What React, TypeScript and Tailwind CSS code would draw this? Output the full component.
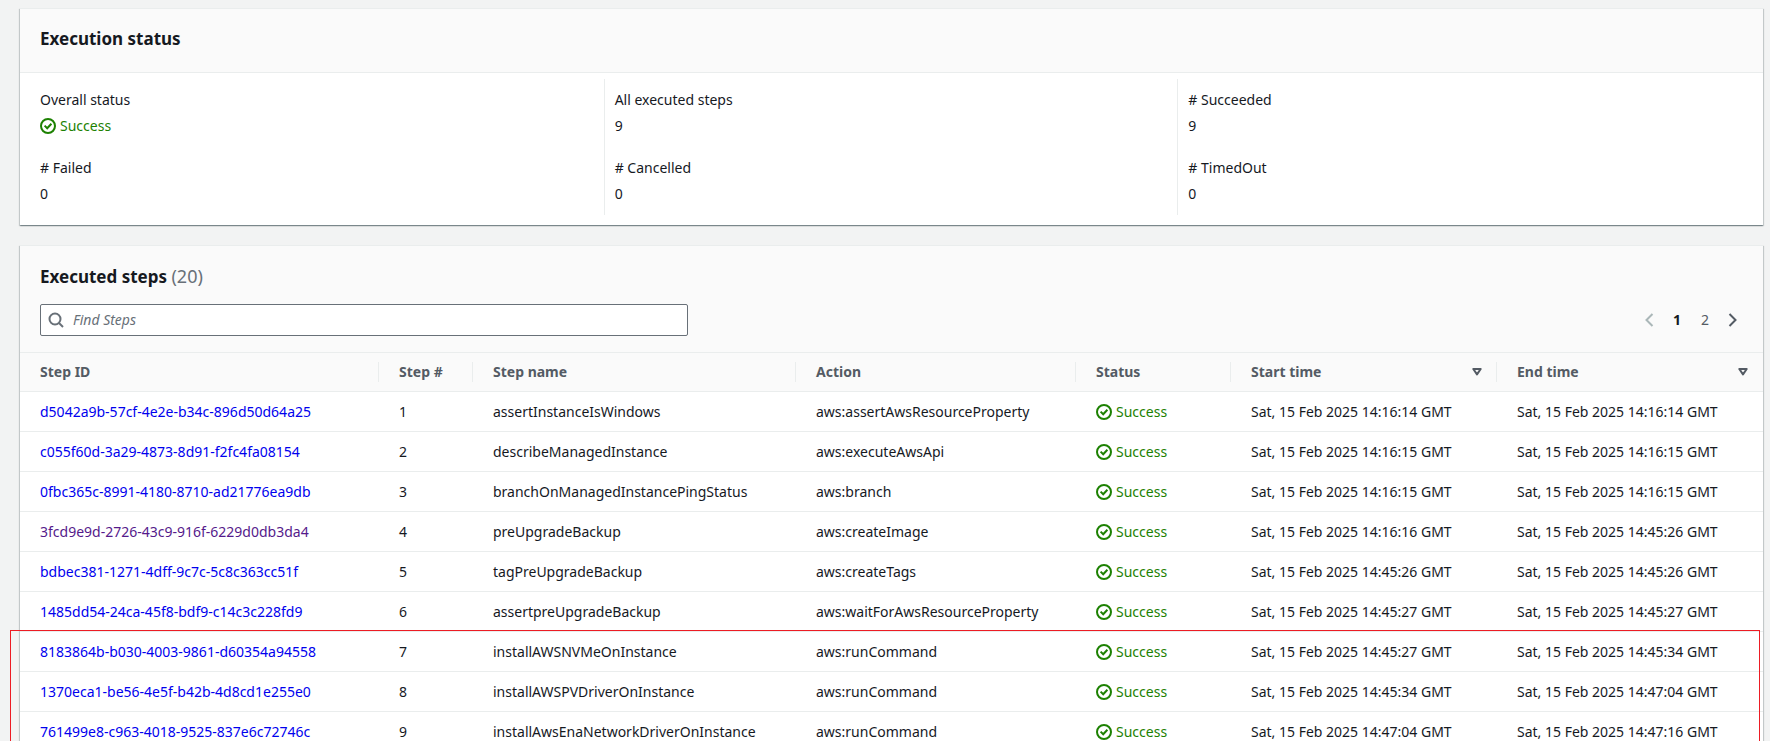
import { useState } from "react";

interface Step {
  id: string;
  name: string;
  action: string;
  start: string;
  end: string;
  visited?: boolean;
}

const steps: Step[] = [
  { id: "d5042a9b-57cf-4e2e-b34c-896d50d64a25", name: "assertInstanceIsWindows", action: "aws:assertAwsResourceProperty", start: "14:16:14", end: "14:16:14" },
  { id: "c055f60d-3a29-4873-8d91-f2fc4fa08154", name: "describeManagedInstance", action: "aws:executeAwsApi", start: "14:16:15", end: "14:16:15" },
  { id: "0fbc365c-8991-4180-8710-ad21776ea9db", name: "branchOnManagedInstancePingStatus", action: "aws:branch", start: "14:16:15", end: "14:16:15" },
  { id: "3fcd9e9d-2726-43c9-916f-6229d0db3da4", name: "preUpgradeBackup", action: "aws:createImage", start: "14:16:16", end: "14:45:26", visited: true },
  { id: "bdbec381-1271-4dff-9c7c-5c8c363cc51f", name: "tagPreUpgradeBackup", action: "aws:createTags", start: "14:45:26", end: "14:45:26" },
  { id: "1485dd54-24ca-45f8-bdf9-c14c3c228fd9", name: "assertpreUpgradeBackup", action: "aws:waitForAwsResourceProperty", start: "14:45:27", end: "14:45:27" },
  { id: "8183864b-b030-4003-9861-d60354a94558", name: "installAWSNVMeOnInstance", action: "aws:runCommand", start: "14:45:27", end: "14:45:34" },
  { id: "1370eca1-be56-4e5f-b42b-4d8cd1e255e0", name: "installAWSPVDriverOnInstance", action: "aws:runCommand", start: "14:45:34", end: "14:47:04" },
  { id: "761499e8-c963-4018-9525-837e6c72746c", name: "installAwsEnaNetworkDriverOnInstance", action: "aws:runCommand", start: "14:47:04", end: "14:47:16" },
];

const columns = [
  { label: "Step ID", width: "w-[359px]" },
  { label: "Step #", width: "w-[94px]" },
  { label: "Step name", width: "w-[323px]" },
  { label: "Action", width: "w-[280px]" },
  { label: "Status", width: "w-[155px]" },
  { label: "Start time", width: "w-[266px]", sortable: true },
  { label: "End time", width: "", sortable: true },
];

const summary = [
  [
    { label: "Overall status", value: <Success /> },
    { label: "# Failed", value: "0" },
  ],
  [
    { label: "All executed steps", value: "9" },
    { label: "# Cancelled", value: "0" },
  ],
  [
    { label: "# Succeeded", value: "9" },
    { label: "# TimedOut", value: "0" },
  ],
];

const cardClass =
  "border-t border-[#eaeded] bg-white shadow-[0_1px_1px_0_rgba(0,28,36,0.3),1px_1px_1px_0_rgba(0,28,36,0.15),-1px_1px_1px_0_rgba(0,28,36,0.15)]";

function Success() {
  return (
    <span className="inline-flex items-center gap-1 text-[#1d8102]">
      <svg viewBox="0 0 16 16" className="size-4" fill="none" stroke="currentColor" strokeWidth="2" aria-hidden="true">
        <circle cx="8" cy="8" r="7" />
        <path d="M4.6 7.6l2.6 2.6 4.2-4.4" />
      </svg>
      Success
    </span>
  );
}

function Chevron({ left }: { left?: boolean }) {
  return (
    <svg viewBox="0 0 16 16" className="size-4" fill="none" stroke="currentColor" strokeWidth="2" aria-hidden="true">
      <path d={left ? "M11.5 2l-6 6 6 6" : "M4.5 2l6 6-6 6"} />
    </svg>
  );
}

export default function App() {
  const [query, setQuery] = useState("");
  const [page, setPage] = useState(1);

  return (
    <main className="min-h-screen bg-[#f2f3f3] pt-2 pr-[7px] pl-5 font-['Noto_Sans',sans-serif] text-sm leading-[22px] text-[#16191f]">
      <section className={cardClass}>
        <header className="border-b border-[#eaeded] bg-[#fafafa] px-5 pt-[19px] pb-[22px]">
          <h2 className="text-[17px] leading-[22px] font-bold">Execution status</h2>
        </header>
        <div className="grid grid-cols-3 pt-[6px] pr-3 pb-[10px] pl-[10px]">
          {summary.map((items, i) => (
            <dl
              key={i}
              className={`space-y-5 py-[10px] pl-[10px] ${i > 0 ? "border-l border-[#eaeded]" : ""}`}
            >
              {items.map((item) => (
                <div key={item.label} className="space-y-1">
                  <dt>{item.label}</dt>
                  <dd className="flex">{item.value}</dd>
                </div>
              ))}
            </dl>
          ))}
        </div>
      </section>

      <section className={`mt-5 ${cardClass}`}>
        <header className="bg-[#fafafa] px-5 pt-[19px] pb-4">
          <h2 className="text-[17px] leading-[22px] font-bold">
            Executed steps <span className="text-lg leading-[22px] font-normal text-[#687078]">(20)</span>
          </h2>
          <div className="mt-4 flex items-center justify-between">
            <label className="flex h-8 w-[648px] items-center gap-[9px] rounded-xs border border-[#687078] bg-white px-[7px] text-[#687078]">
              <svg viewBox="0 0 16 16" className="size-4 shrink-0" fill="none" stroke="currentColor" strokeWidth="2" aria-hidden="true">
                <circle cx="7" cy="7" r="5.5" />
                <path d="M11 11l4 4" />
              </svg>
              <input
                type="text"
                aria-label="Find Steps"
                placeholder="Find Steps"
                value={query}
                onChange={(e) => setQuery(e.target.value)}
                className="w-full text-[#16191f] outline-none placeholder:text-[#687078] placeholder:italic"
              />
            </label>
            <nav aria-label="Pages" className="-mr-1 flex items-center text-[#545b64]">
              <button
                type="button"
                aria-label="Previous page"
                disabled={page === 1}
                onClick={() => setPage(1)}
                className="flex w-7 justify-center disabled:text-[#aab7b8]"
              >
                <Chevron left />
              </button>
              {[1, 2].map((n) => (
                <button
                  key={n}
                  type="button"
                  onClick={() => setPage(n)}
                  className={n === page ? "w-7 font-bold text-[#16191f]" : "w-7"}
                >
                  {n}
                </button>
              ))}
              <button
                type="button"
                aria-label="Next page"
                disabled={page === 2}
                onClick={() => setPage(2)}
                className="flex w-7 justify-center disabled:text-[#aab7b8]"
              >
                <Chevron />
              </button>
            </nav>
          </div>
        </header>

        <div className="relative">
          <table className="w-full table-fixed text-left whitespace-nowrap">
            <thead className="bg-[#fafafa] text-[#545b64]">
              <tr className="border-y border-[#eaeded]">
                {columns.map((col, i) => (
                  <th key={col.label} scope="col" className={`h-[39px] p-0 font-bold ${col.width}`}>
                    <div
                      className={`flex h-5 items-center justify-between pl-5 ${
                        i < columns.length - 1 ? "border-r border-[#eaeded] pr-[14px]" : "pr-[15px]"
                      }`}
                    >
                      {col.label}
                      {col.sortable && (
                        <svg viewBox="0 0 10 8" className="h-2 w-[10px]" fill="none" stroke="currentColor" strokeWidth="2" aria-hidden="true">
                          <path d="M1.3 1h7.4L5 6.4z" strokeLinejoin="round" />
                        </svg>
                      )}
                    </div>
                  </th>
                ))}
              </tr>
            </thead>
            <tbody>
              {steps.map((step, i) => (
                <tr key={step.id} className="h-10 border-b border-[#eaeded]">
                  <td className="pl-5">
                    <a href={`#${step.id}`} className={step.visited ? "text-[#551a8b]" : "text-[#0000ee]"}>
                      {step.id}
                    </a>
                  </td>
                  <td className="pl-5">{i + 1}</td>
                  <td className="pl-5">{step.name}</td>
                  <td className="pl-5">{step.action}</td>
                  <td className="pl-5">
                    <div className="flex">
                      <Success />
                    </div>
                  </td>
                  <td className="pl-5">Sat, 15 Feb 2025 {step.start} GMT</td>
                  <td className="pl-5">Sat, 15 Feb 2025 {step.end} GMT</td>
                </tr>
              ))}
            </tbody>
          </table>
          {/* outline around the driver install steps */}
          <div className="pointer-events-none absolute top-[278px] right-[3px] bottom-0 -left-[10px] border border-[#ed1c24]" />
        </div>
      </section>
    </main>
  );
}
